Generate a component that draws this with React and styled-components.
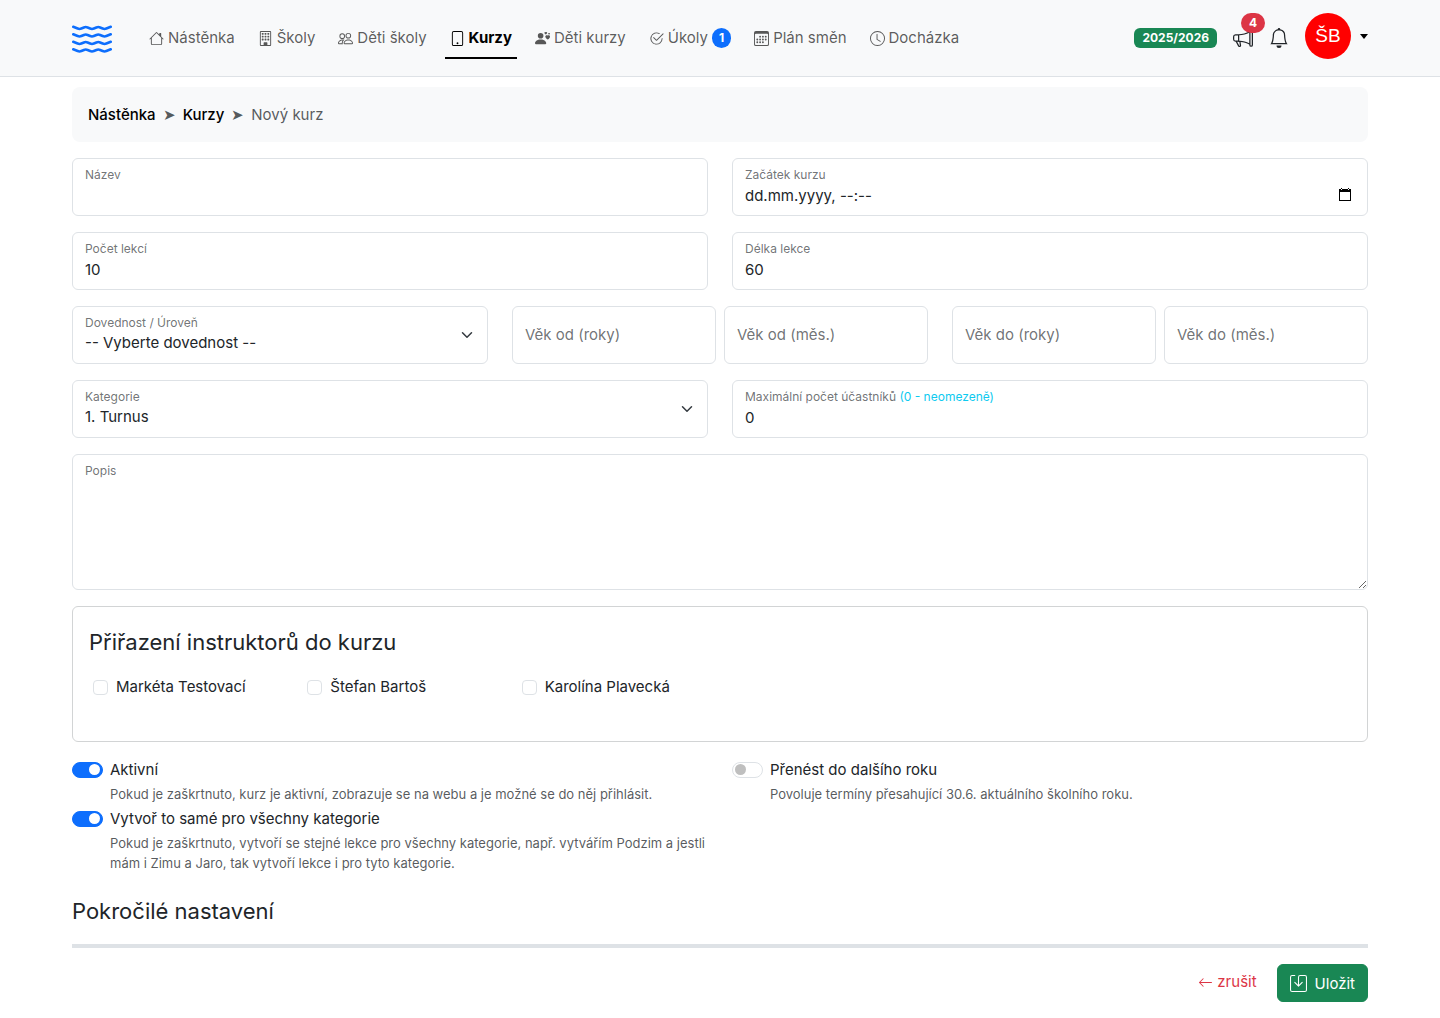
import React from 'react';
import styled, { createGlobalStyle, css } from 'styled-components';
import {
  BsArrowLeft,
  BsBell,
  BsBuilding,
  BsCalendar3,
  BsCheck2Circle,
  BsClock,
  BsHouse,
  BsMegaphone,
  BsPeople,
  BsPersonHearts,
  BsSave,
  BsTablet,
  BsWater,
} from 'react-icons/bs';

const GlobalStyle = createGlobalStyle`
  *, *::before, *::after {
    box-sizing: border-box;
  }
  body {
    margin: 0;
    background: #fff;
    color: #212529;
    font-family: Inter, "Liberation Sans", sans-serif;
    font-size: 15px;
    line-height: 22px;
  }
  input, select, textarea, button {
    font-family: inherit;
  }
`;

const Header = styled.header`
  display: flex;
  align-items: center;
  min-height: 77px;
  padding: 0 72px;
  background: #f8f9fa;
  border-bottom: 1px solid #dee2e6;
`;
const Brand = styled.a`
  display: flex;
  margin-right: 32px;
  color: #0d6efd;
`;
const Nav = styled.nav`
  display: flex;
  flex: 1;
  gap: 13px;
`;
const NavLink = styled.a`
  display: flex;
  align-items: center;
  gap: 4px;
  height: 42px;
  padding: 2px 5px 0;
  border-bottom: 2px solid transparent;
  color: rgba(0, 0, 0, 0.65);
  text-decoration: none;
  white-space: nowrap;

  ${({ $active }) => $active && css`
    color: #000;
    font-weight: 700;
    border-bottom-color: #000;
  `}
`;
const Badge = styled.span`
  padding: 4px 8px;
  border-radius: ${({ $pill }) => ($pill ? '10px' : '6px')};
  background: ${({ $color }) => $color};
  color: #fff;
  font-size: 12px;
  font-weight: 700;
  line-height: 12px;
`;
const CountBadge = styled(Badge)`
  padding: 4px 7px;
`;
const HeaderTools = styled.div`
  display: flex;
  align-items: center;
  gap: 16px;
`;
const IconButton = styled.button`
  position: relative;
  display: flex;
  padding: 0;
  border: 0;
  background: none;
  color: #212529;
`;
const AlertBadge = styled(Badge)`
  position: absolute;
  top: -15px;
  left: 8px;
`;
const UserButton = styled.button`
  display: flex;
  align-items: center;
  gap: 9px;
  margin-bottom: 4px;
  padding: 0;
  border: 0;
  background: none;
`;
const Avatar = styled.span`
  width: 46px;
  height: 46px;
  border-radius: 50%;
  background: #f00;
  color: #fff;
  font-family: "Liberation Sans", Arial, sans-serif;
  font-size: 19px;
  line-height: 45px;
`;
const Caret = styled.span`
  border: 4px solid transparent;
  border-top: 5px solid #000;
  border-bottom: 0;
`;

const Page = styled.main`
  padding: 10px 72px 16px;
`;
const Breadcrumb = styled.nav`
  display: flex;
  gap: 7px;
  margin-bottom: 16px;
  padding: 16px;
  border-radius: 8px;
  background: #f8f9fa;
  color: rgba(33, 37, 41, 0.75);
  line-height: 23px;

  & > a {
    color: #000;
    font-weight: 500;
    text-decoration: none;
  }
`;
const Form = styled.form`
  display: flex;
  flex-direction: column;
  gap: 16px;
`;
const Row = styled.div`
  display: grid;
  grid-template-columns: ${({ $columns }) => $columns || '1fr 1fr'};
  gap: ${({ $gap }) => $gap || '24px'};
`;
const Field = styled.div`
  display: grid;
  align-items: ${({ $empty }) => ($empty ? 'center' : 'start')};

  & > * {
    grid-area: 1 / 1;
    min-width: 0;
  }
`;
const Label = styled.label`
  z-index: 1;
  padding: ${({ $empty }) => ($empty ? '0 13px' : '7px 13px 0')};
  color: rgba(33, 37, 41, 0.65);
  font-size: ${({ $empty }) => ($empty ? '15px' : '12px')};
  line-height: 20px;
  pointer-events: none;
`;
const Hint = styled.span`
  color: #0dcaf0;
`;
const control = css`
  display: block;
  width: 100%;
  height: 58px;
  margin: 0;
  padding: 25px 12px 9px;
  border: 1px solid #dee2e6;
  border-radius: 6px;
  background: #fff;
  color: #212529;
  font-size: 15px;
  line-height: 22px;
  outline: 0;
  appearance: none;

  &::placeholder {
    color: #212529;
    opacity: 1;
  }
`;
const Input = styled.input`
  ${control}
`;
const Select = styled.select`
  ${control}
`;
const Textarea = styled.textarea`
  ${control}
  height: 136px;
  resize: vertical;
`;
const FieldIcon = styled.svg`
  z-index: 1;
  place-self: center end;
  margin-right: 13px;
  pointer-events: none;
`;
const DateIcon = styled(FieldIcon)`
  margin: 16px 16px 0 0;
`;

const Card = styled.section`
  min-height: 136px;
  padding: 20px 16px;
  border: 1px solid #d2d4d5;
  border-radius: 6px;
`;
const Title = styled.h4`
  margin: 0;
  font-size: 22px;
  font-weight: 400;
  line-height: 30px;
`;
const CheckGrid = styled.div`
  display: grid;
  grid-template-columns: repeat(6, 1fr);
  margin: 19px -12px 0;
`;
const Check = styled.label`
  display: flex;
  align-items: center;
  gap: 8px;
  padding-left: 16px;
`;
const Checkbox = styled.input`
  flex: none;
  width: 15px;
  height: 15px;
  margin: 0;
  border: 1px solid #dee2e6;
  border-radius: 4px;
  background: #fff;
  appearance: none;

  &:checked {
    background: #0d6efd;
    border-color: #0d6efd;
  }
`;
const SwitchColumn = styled.div`
  display: flex;
  flex-direction: column;
  gap: 3px;
`;
const SwitchLabel = styled.label`
  display: flex;
  align-items: center;
  gap: 7px;
  line-height: 23px;
`;
const SwitchInput = styled(Checkbox)`
  display: flex;
  align-items: center;
  width: 31px;
  height: 16px;
  padding: 0 2px;
  border-radius: 8px;

  &::before {
    content: '';
    width: 11px;
    height: 11px;
    border-radius: 50%;
    background: #bfbfbf;
  }
  &:checked {
    justify-content: flex-end;
  }
  &:checked::before {
    background: #fff;
  }
`;
const Help = styled.p`
  margin: 3px 0 0 38px;
  color: rgba(33, 37, 41, 0.75);
  font-size: 13px;
  line-height: 20px;
`;
const Advanced = styled.section`
  padding: 7px 0 18px;
  border-bottom: 4px solid #dee2e6;
`;
const Actions = styled.div`
  display: flex;
  justify-content: flex-end;
  align-items: center;
  gap: 20px;
`;
const Cancel = styled.a`
  display: flex;
  align-items: center;
  gap: 4px;
  padding-bottom: 2px;
  color: #dc3545;
  text-decoration: none;
`;
const Save = styled.button`
  display: flex;
  align-items: center;
  gap: 8px;
  height: 38px;
  padding: 0 12px;
  border: 1px solid #198754;
  border-radius: 6px;
  background: #198754;
  color: #fff;
  font-size: 15px;
`;

const links = [
  { text: 'Nástěnka', icon: BsHouse },
  { text: 'Školy', icon: BsBuilding },
  { text: 'Děti školy', icon: BsPeople },
  { text: 'Kurzy', icon: BsTablet, active: true },
  { text: 'Děti kurzy', icon: BsPersonHearts },
  { text: 'Úkoly', icon: BsCheck2Circle, count: 1 },
  { text: 'Plán směn', icon: BsCalendar3 },
  { text: 'Docházka', icon: BsClock },
];
const instructors = ['Markéta Testovací', 'Štefan Bartoš', 'Karolína Plavecká'];

function TextField({ id, label, hint, empty, children, ...rest }) {
  return (
    <Field $empty={empty}>
      <Input id={id} {...rest} />
      <Label htmlFor={id} $empty={empty}>
        {label} {hint && <Hint>{hint}</Hint>}
      </Label>
      {children}
    </Field>
  );
}

function SelectField({ id, label, options }) {
  return (
    <Field>
      <Select id={id}>
        {options.map((option) => <option key={option}>{option}</option>)}
      </Select>
      <Label htmlFor={id}>{label}</Label>
      <FieldIcon width="16" height="12" viewBox="0 0 16 16" fill="none">
        <path d="m2 5 6 6 6-6" stroke="#343a40" strokeWidth="2" strokeLinecap="round" strokeLinejoin="round" />
      </FieldIcon>
    </Field>
  );
}

function Switch({ label, help, checked }) {
  return (
    <div>
      <SwitchLabel>
        <SwitchInput type="checkbox" role="switch" defaultChecked={checked} />
        {label}
      </SwitchLabel>
      <Help>{help}</Help>
    </div>
  );
}

export default function App() {
  return (
    <>
      <GlobalStyle />
      <Header>
        <Brand href="#" aria-label="Domů"><BsWater size={40} /></Brand>
        <Nav>
          {links.map(({ text, icon: Icon, active, count }) => (
            <NavLink key={text} href="#" $active={active}>
              <Icon size={15} />
              {text}
              {count && <CountBadge $pill $color="#0d6efd">{count}</CountBadge>}
            </NavLink>
          ))}
        </Nav>
        <HeaderTools>
          <Badge $color="#198754">2025/2026</Badge>
          <IconButton type="button" aria-label="Novinky">
            <BsMegaphone size={20} />
            <AlertBadge $pill $color="#dc3545">4</AlertBadge>
          </IconButton>
          <IconButton type="button" aria-label="Upozornění"><BsBell size={20} /></IconButton>
          <UserButton type="button">
            <Avatar>ŠB</Avatar>
            <Caret />
          </UserButton>
        </HeaderTools>
      </Header>
      <Page>
        <Breadcrumb>
          <a href="#">Nástěnka</a>
          <span>➤</span>
          <a href="#">Kurzy</a>
          <span>➤</span>
          <span>Nový kurz</span>
        </Breadcrumb>
        <Form>
          <Row>
            <TextField id="name" label="Název" />
            <TextField id="start" label="Začátek kurzu" placeholder="dd.mm.yyyy, --:--">
              <DateIcon width="14" height="16" viewBox="0 0 14 16">
                <path d="M3 1h1v2H3zM10 1h1v2h-1zM1 2h12v12H1zM2 5v8h10V5z" fill="#000" fillRule="evenodd" />
              </DateIcon>
            </TextField>
          </Row>
          <Row>
            <TextField id="lessons" label="Počet lekcí" defaultValue="10" />
            <TextField id="length" label="Délka lekce" defaultValue="60" />
          </Row>
          <Row $columns="repeat(3, 1fr)">
            <SelectField id="skill" label="Dovednost / Úroveň" options={['-- Vyberte dovednost --']} />
            <Row $gap="8px">
              <TextField id="fromYears" label="Věk od (roky)" empty />
              <TextField id="fromMonths" label="Věk od (měs.)" empty />
            </Row>
            <Row $gap="8px">
              <TextField id="toYears" label="Věk do (roky)" empty />
              <TextField id="toMonths" label="Věk do (měs.)" empty />
            </Row>
          </Row>
          <Row>
            <SelectField id="category" label="Kategorie" options={['1. Turnus']} />
            <TextField id="max" label="Maximální počet účastníků" hint="(0 - neomezeně)" defaultValue="0" />
          </Row>
          <Field>
            <Textarea id="description" />
            <Label htmlFor="description">Popis</Label>
          </Field>
          <Card>
            <Title>Přiřazení instruktorů do kurzu</Title>
            <CheckGrid>
              {instructors.map((name) => (
                <Check key={name}>
                  <Checkbox type="checkbox" />
                  {name}
                </Check>
              ))}
            </CheckGrid>
          </Card>
          <Row>
            <SwitchColumn>
              <Switch
                checked
                label="Aktivní"
                help="Pokud je zaškrtnuto, kurz je aktivní, zobrazuje se na webu a je možné se do něj přihlásit."
              />
              <Switch
                checked
                label="Vytvoř to samé pro všechny kategorie"
                help="Pokud je zaškrtnuto, vytvoří se stejné lekce pro všechny kategorie, např. vytvářím Podzim a jestli mám i Zimu a Jaro, tak vytvoří lekce i pro tyto kategorie."
              />
            </SwitchColumn>
            <SwitchColumn>
              <Switch label="Přenést do dalšího roku" help="Povoluje termíny přesahující 30.6. aktuálního školního roku." />
            </SwitchColumn>
          </Row>
          <Advanced>
            <Title>Pokročilé nastavení</Title>
          </Advanced>
          <Actions>
            <Cancel href="#"><BsArrowLeft size={15} /> zrušit</Cancel>
            <Save type="submit"><BsSave size={17} /> Uložit</Save>
          </Actions>
        </Form>
      </Page>
    </>
  );
}
